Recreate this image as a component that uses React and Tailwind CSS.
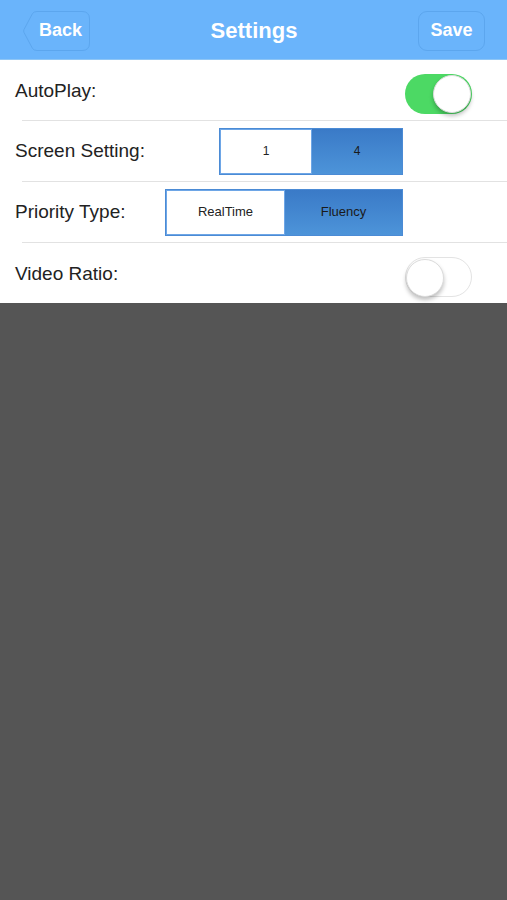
import { useState } from 'react';

const font = { fontFamily: '"Liberation Sans", Arial, sans-serif' };

// iOS style switch
const Toggle = ({ on, onChange }) => (
  <button
    type="button"
    onClick={() => onChange(!on)}
    className={`relative block w-[67px] h-[40px] rounded-full transition-colors ${
      on ? 'bg-[#4cd964]' : 'bg-white border border-[#e3e3e3]'
    }`}
  >
    <span
      className={`absolute top-[1px] w-[38px] h-[38px] rounded-full bg-white shadow-[0_3px_4px_rgba(0,0,0,0.25)] border border-[#dcdcdc] transition-all ${
        on ? 'left-[28px]' : 'left-[0px] top-[0px]'
      }`}
    />
  </button>
);

const Segmented = ({ options, value, onChange, widthClass, textClass }) => (
  <div className={`flex h-[47px] border border-[#4b8bd5] ${widthClass}`}>
    {options.map((opt) => {
      const active = opt === value;
      return (
        <button
          key={opt}
          type="button"
          onClick={() => onChange(opt)}
          className={`flex-1 flex items-center justify-center ${textClass} ${
            active
              ? 'bg-gradient-to-b from-[#3a7ac7] to-[#4d94d9] text-[#1a1a1a]'
              : 'bg-white text-[#222] border border-[#6ea6e6]'
          }`}
        >
          {opt}
        </button>
      );
    })}
  </div>
);

const Divider = () => <div className="ml-[22px] h-px bg-[#e2e2e2]" />;

export default function App() {
  const [autoPlay, setAutoPlay] = useState(true);
  const [screen, setScreen] = useState('4');
  const [priority, setPriority] = useState('Fluency');
  const [ratio, setRatio] = useState(false);

  return (
    <div className="min-h-screen bg-[#555555] flex flex-col" style={font}>
      {/* Nav bar */}
      <div className="h-[60px] bg-[#6ab4fb] border-b border-[#8fc6f5] flex items-center justify-between pl-[23px] pr-[22px] pt-[2px]">
        <button type="button" className="relative w-[67px] h-[40px] flex items-center justify-center">
          <svg className="absolute inset-0" width="67" height="40" viewBox="0 0 67 40">
            <path
              d="M14 0.5 H59 Q66.5 0.5 66.5 8 V32 Q66.5 39.5 59 39.5 H14 Q11 39.5 9.5 37.5 L1 21.5 Q0.3 20 1 18.5 L9.5 2.5 Q11 0.5 14 0.5 Z"
              fill="#6ab4fb"
              stroke="#5ca6ee"
              strokeWidth="1"
            />
          </svg>
          <span className="relative pl-[8px] text-white font-bold text-[18px]">Back</span>
        </button>
        <h1 className="text-white font-bold text-[22px]">Settings</h1>
        <button
          type="button"
          className="w-[67px] h-[40px] rounded-[9px] border border-[#5ca6ee] text-white font-bold text-[18px]"
        >
          Save
        </button>
      </div>

      {/* Settings list */}
      <div className="bg-white text-[#222] text-[19px]">
        <div className="h-[60px] flex items-center pl-[15px] pr-[35px]">
          <span className="mt-[2px]">AutoPlay:</span>
          <div className="ml-auto mt-[8px] flex">
            <Toggle on={autoPlay} onChange={setAutoPlay} />
          </div>
        </div>
        <Divider />
        <div className="h-[60px] flex items-center pl-[15px] pr-[104px]">
          <span>Screen Setting:</span>
          <div className="ml-auto">
            <Segmented
              options={['1', '4']}
              value={screen}
              onChange={setScreen}
              widthClass="w-[184px]"
              textClass="text-[12px]"
            />
          </div>
        </div>
        <Divider />
        <div className="h-[60px] flex items-center pl-[15px] pr-[104px]">
          <span>Priority Type:</span>
          <div className="ml-auto">
            <Segmented
              options={['RealTime', 'Fluency']}
              value={priority}
              onChange={setPriority}
              widthClass="w-[238px]"
              textClass="text-[13px]"
            />
          </div>
        </div>
        <Divider />
        <div className="h-[60px] flex items-center pl-[15px] pr-[35px]">
          <span className="mt-[2px]">Video Ratio:</span>
          <div className="ml-auto mt-[8px] flex">
            <Toggle on={ratio} onChange={setRatio} />
          </div>
        </div>
      </div>
    </div>
  );
}
